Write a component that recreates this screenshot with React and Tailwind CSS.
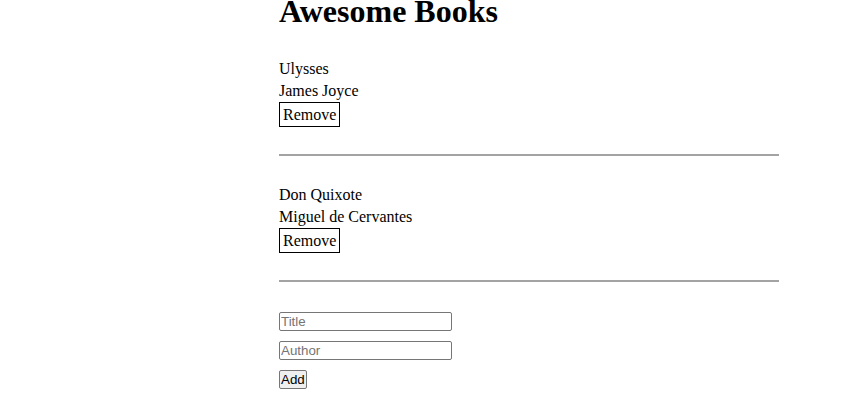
import React, { useState } from 'react';

const initialBooks = [
  { id: 1, title: 'Ulysses', author: 'James Joyce' },
  { id: 2, title: 'Don Quixote', author: 'Miguel de Cervantes' },
];

export default function App() {
  const [books, setBooks] = useState(initialBooks);
  const [title, setTitle] = useState('');
  const [author, setAuthor] = useState('');

  const addBook = (e) => {
    e.preventDefault();
    if (!title || !author) return;
    setBooks([...books, { id: Date.now(), title, author }]);
    setTitle('');
    setAuthor('');
  };

  return (
    <div className="min-h-[417px] bg-white text-black font-['Liberation_Serif','Times_New_Roman',serif] text-[16px] overflow-hidden">
      <div className="ml-[279px] w-[500px]">
        <h1 className="mt-[-7px] text-[32px] leading-[37px] font-bold">Awesome Books</h1>

        <div className="mt-[28px]">
          {books.map(book => (
            <div key={book.id}>
              <p className="leading-[22px]">{book.title}</p>
              <p className="leading-[22px]">{book.author}</p>
              <button
                onClick={() => setBooks(books.filter(b => b.id !== book.id))}
                className="h-[25px] px-[3px] border border-black bg-white leading-[22px] block"
              >
                Remove
              </button>
              <hr className="mt-[27px] mb-[28px] h-[2px] border-0 bg-[#a3a3a3]" />
            </div>
          ))}
        </div>

        {/* margin collapses with the last hr, so this is the full gap */}
        <form onSubmit={addBook} className="mt-[30px] flex flex-col items-start gap-[10px] font-['Liberation_Sans',Arial,sans-serif] text-[13.33px]">
          <input
            value={title}
            onChange={e => setTitle(e.target.value)}
            placeholder="Title"
            className="h-[19px] w-[173px] border border-[#767676] rounded-[2px] px-[1px] leading-[17px] placeholder:text-[#757575] outline-none"
          />
          <input
            value={author}
            onChange={e => setAuthor(e.target.value)}
            placeholder="Author"
            className="h-[19px] w-[173px] border border-[#767676] rounded-[2px] px-[1px] leading-[17px] placeholder:text-[#757575] outline-none"
          />
          <button
            type="submit"
            className="h-[19px] px-[1px] border border-[#767676] rounded-[2px] bg-[#efefef] leading-[17px]"
          >
            Add
          </button>
        </form>
      </div>
    </div>
  );
}
